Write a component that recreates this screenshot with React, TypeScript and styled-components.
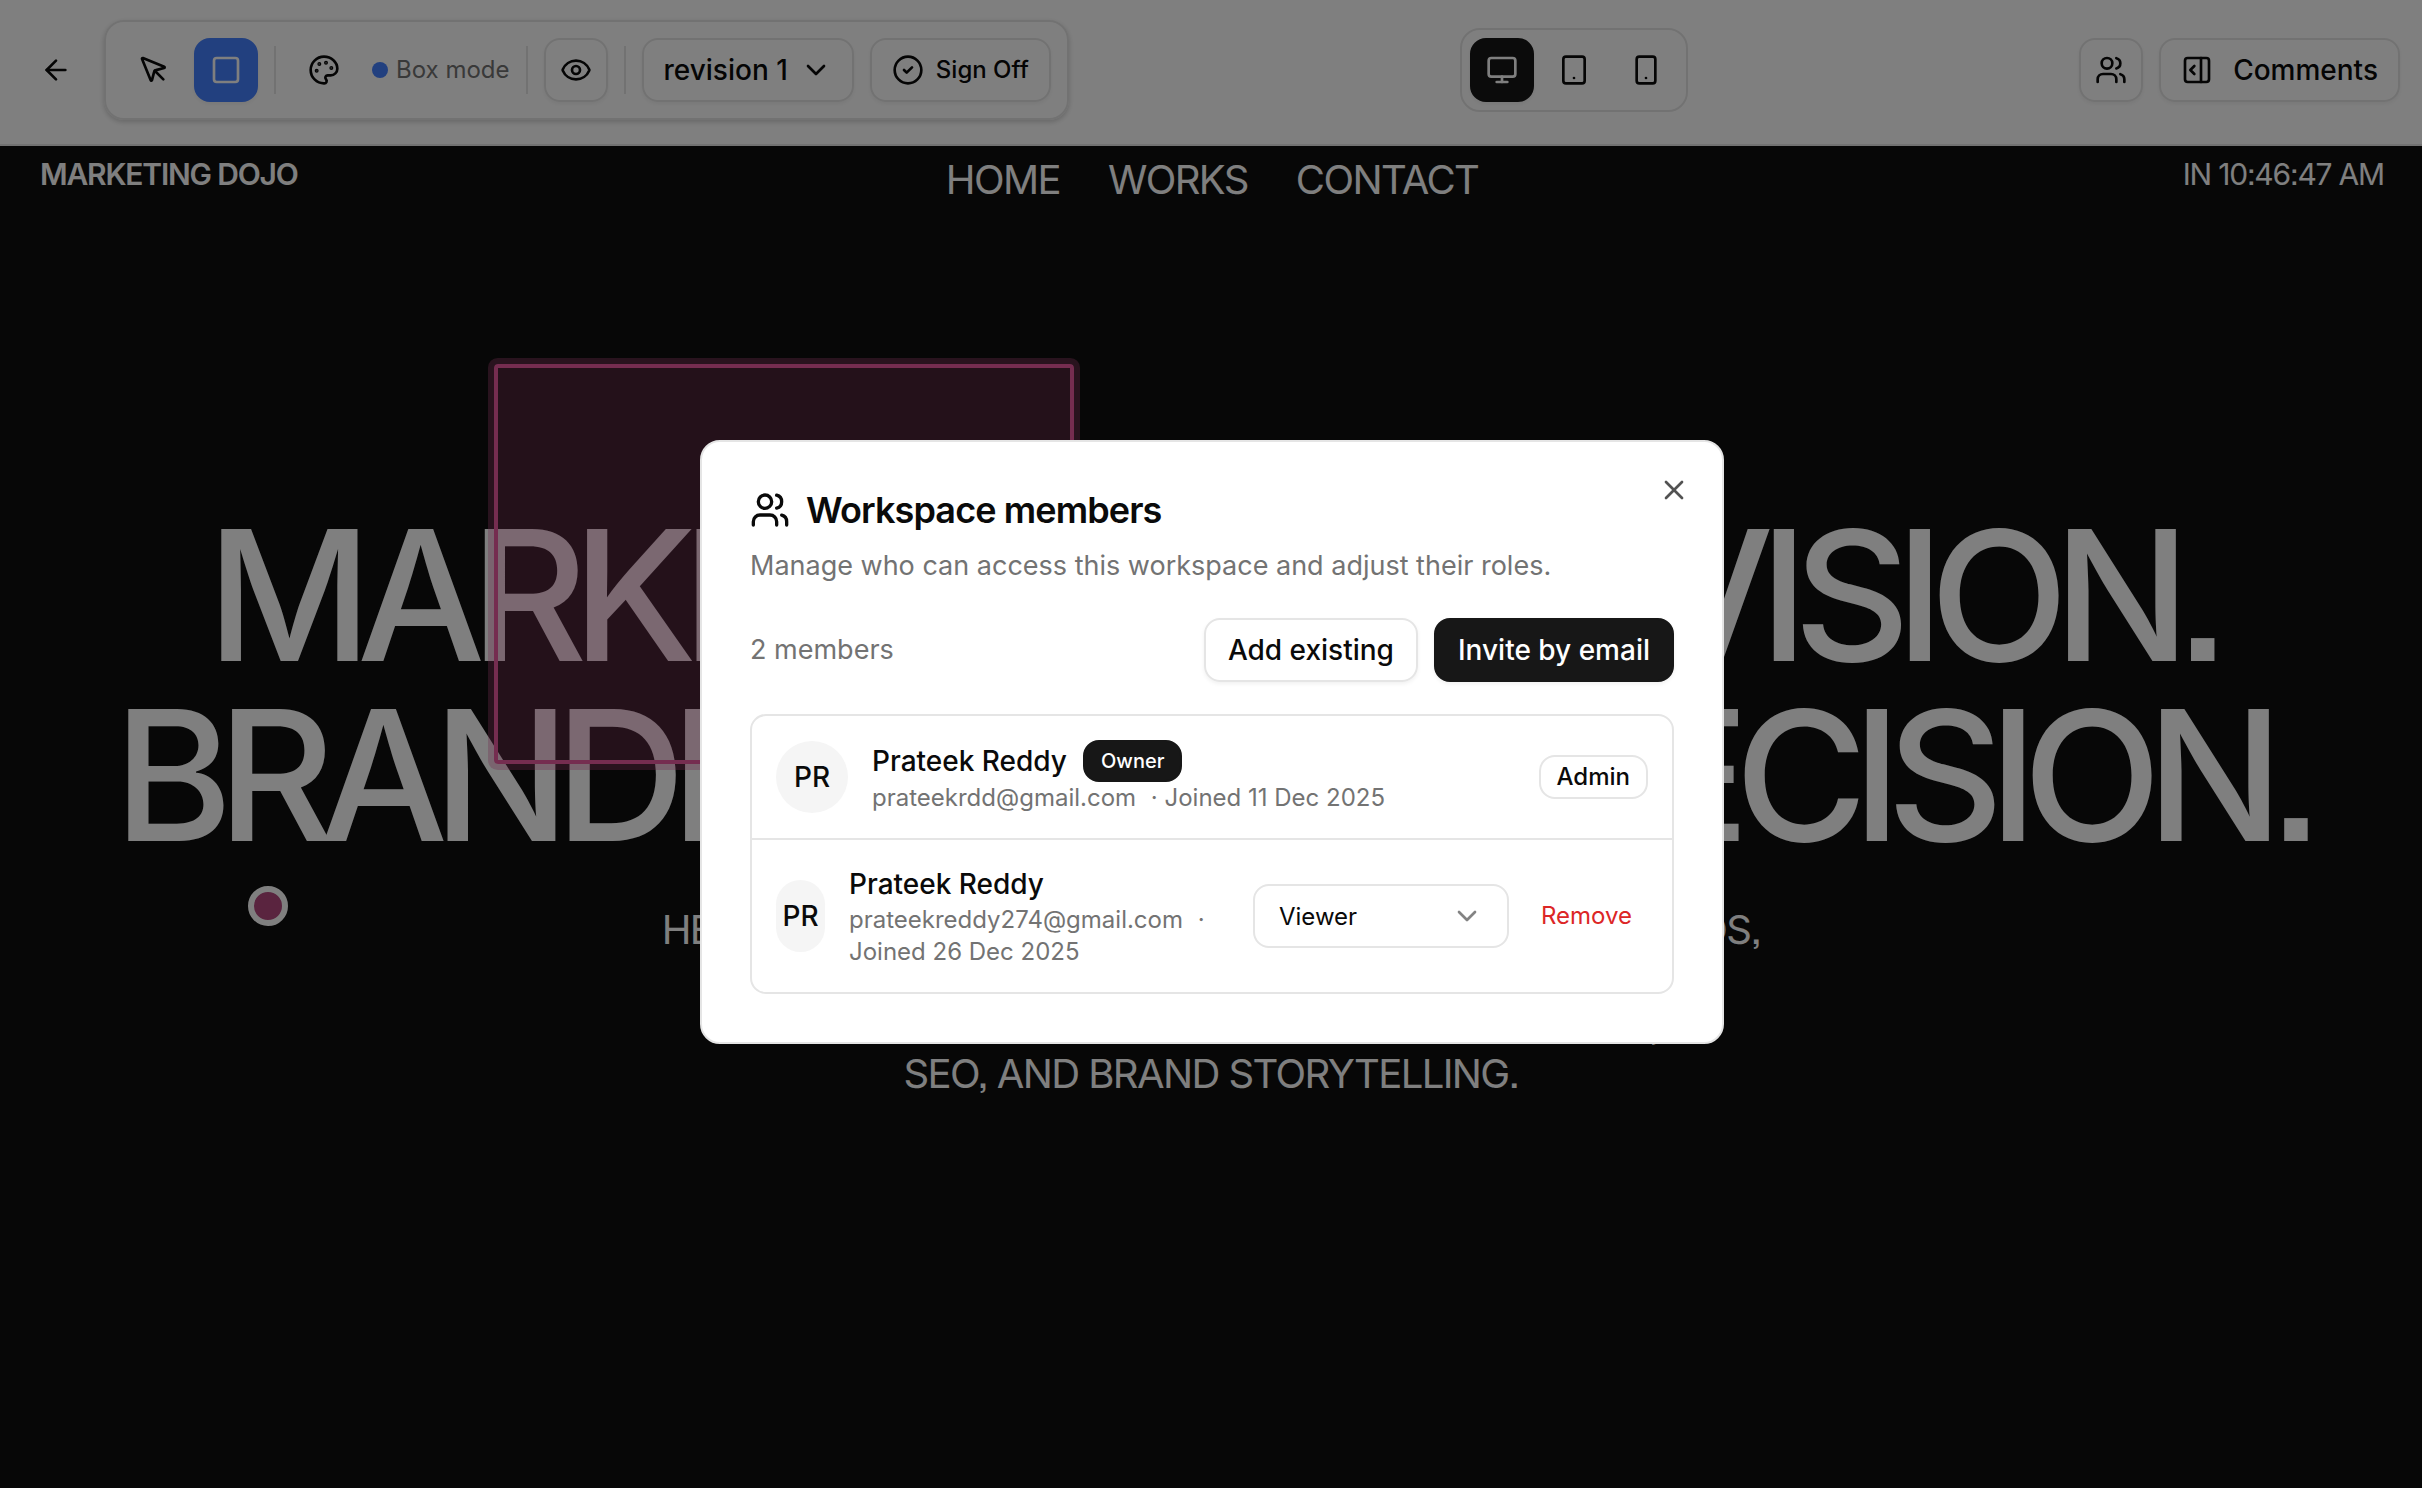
import React, { useState } from "react";
import styled, { createGlobalStyle } from "styled-components";
import {
  ArrowLeft,
  ChevronDown,
  CircleCheck,
  Eye,
  Monitor,
  MousePointer,
  Palette,
  PanelRightOpen,
  Smartphone,
  Square,
  Tablet,
  Users,
  X,
} from "lucide-react";

const color = {
  text: "#0a0a0a",
  muted: "#737373",
  border: "#e5e5e5",
  dark: "#171717",
  blue: "#4580ff",
  danger: "#dc2626",
  page: "#0e0e0e",
};

const GlobalStyle = createGlobalStyle`
  *, *::before, *::after { box-sizing: border-box; }
  body { margin: 0; background: #0e0e0e; }
  body, button, select { font-family: Inter, "Liberation Sans", sans-serif; }
  button, select { cursor: pointer; }
  h1, h2, p, ul { margin: 0; padding: 0; }
`;

const Shell = styled.div`
  display: flex;
  flex-direction: column;
  min-height: 100vh;
  color: ${color.text};
`;

const Toolbar = styled.header`
  display: flex;
  align-items: center;
  justify-content: space-between;
  padding: 20px 22px 24px 24px;
  background: #fff;
  border-bottom: 2px solid ${color.border};
`;

const Cluster = styled.div`
  display: flex;
  align-items: center;
  gap: 16px;
`;

const ToolGroup = styled.div`
  display: flex;
  align-items: center;
  gap: 8px;
  padding: 16px;
  border: 2px solid ${color.border};
  border-radius: 20px;
  box-shadow: 0 2px 6px rgba(0, 0, 0, 0.1), 0 2px 4px rgba(0, 0, 0, 0.1);
`;

const DeviceGroup = styled.div`
  display: flex;
  gap: 8px;
  padding: 8px;
  border: 2px solid ${color.border};
  border-radius: 20px;
`;

const Divider = styled.span`
  width: 2px;
  height: 48px;
  margin: 0 8px;
  background: ${color.border};
`;

const Button = styled.button<{ $variant?: "ghost" | "outline" | "dark" | "blue" }>`
  display: inline-flex;
  align-items: center;
  justify-content: center;
  gap: 12px;
  height: 64px;
  padding: 0 20px;
  border: 2px solid
    ${({ $variant }) =>
      $variant === "outline"
        ? color.border
        : $variant === "dark"
          ? color.dark
          : $variant === "blue"
            ? color.blue
            : "transparent"};
  border-radius: 16px;
  background: ${({ $variant }) =>
    $variant === "dark" ? color.dark : $variant === "blue" ? color.blue : "transparent"};
  color: ${({ $variant }) =>
    $variant === "dark" || $variant === "blue" ? "#fff" : color.text};
  box-shadow: ${({ $variant }) =>
    !$variant || $variant === "ghost" ? "none" : "0 2px 4px rgba(0, 0, 0, 0.06)"};
  font-size: 28px;
  font-weight: 500;
  line-height: 40px;
  white-space: nowrap;
`;

const IconButton = styled(Button)`
  width: 64px;
  padding: 0;
`;

const SmallButton = styled(Button)`
  font-size: 24px;
`;

const WideGap = styled(Button)`
  gap: 20px;
`;

const ActionButton = styled(Button)`
  padding: 0 22px;
`;

const Mode = styled.span`
  display: flex;
  align-items: center;
  gap: 8px;
  padding-left: 8px;
  color: ${color.muted};
  font-size: 24px;
  line-height: 32px;
`;

const ModeDot = styled.span`
  width: 16px;
  height: 16px;
  border-radius: 50%;
  background: ${color.blue};
`;

const Spaced = styled.div`
  display: flex;
  gap: 16px;
`;

const Canvas = styled.main`
  position: relative;
  flex: 1;
  background: ${color.page};
  color: #fff;
  font-feature-settings: "ss07";
`;

const SiteNav = styled.nav`
  display: grid;
  grid-template-columns: 1fr auto 1fr;
  padding: 4px 38px 0 40px;
`;

const Brand = styled.span`
  padding-top: 4px;
  font-size: 30px;
  font-weight: 600;
  line-height: 40px;
  letter-spacing: -0.04em;
`;

const Clock = styled(Brand)`
  font-weight: 400;
  text-align: right;
`;

const SiteLinks = styled.div`
  display: flex;
  gap: 48px;
`;

const SiteLink = styled.a`
  color: inherit;
  font-size: 40px;
  line-height: 60px;
  letter-spacing: -0.04em;
  text-decoration: none;
`;

const Hero = styled.section`
  padding-top: 296px;
  text-align: center;
`;

const Headline = styled.h1`
  font-size: 181px;
  font-weight: 500;
  line-height: 180px;
  letter-spacing: -0.083em;
  white-space: nowrap;
`;

const Lede = styled.p`
  margin-top: 40px;
  font-size: 40px;
  line-height: 48px;
  letter-spacing: -0.04em;
`;

const BoxNote = styled.div`
  position: absolute;
  top: 218px;
  left: 494px;
  width: 580px;
  height: 400px;
  border: 4px solid #ea5aa0;
  border-radius: 4px;
  background: rgba(225, 91, 154, 0.28);
  background-clip: padding-box;
  box-shadow: 0 0 0 6px rgba(225, 91, 154, 0.33);
`;

const PinNote = styled.button`
  position: absolute;
  top: 740px;
  left: 248px;
  width: 40px;
  height: 40px;
  padding: 0;
  border: 6px solid #fff;
  border-radius: 50%;
  background: #b4487e;
`;

const Overlay = styled.div`
  position: fixed;
  inset: 0;
  display: grid;
  place-items: center;
  padding: 0 0 4px 2px;
  background: rgba(0, 0, 0, 0.5);
`;

const Dialog = styled.section`
  position: relative;
  width: 1024px;
  max-width: 100%;
  padding: 48px;
  border: 2px solid ${color.border};
  border-radius: 20px;
  background: #fff;
`;

const CloseButton = styled.button`
  position: absolute;
  top: 32px;
  right: 32px;
  display: flex;
  padding: 0;
  border: 0;
  background: none;
  color: ${color.text};
  opacity: 0.7;
`;

const Title = styled.h2`
  display: flex;
  align-items: center;
  gap: 16px;
  font-size: 36px;
  font-weight: 600;
  line-height: 40px;
  letter-spacing: -0.025em;
`;

const Muted = styled.p`
  color: ${color.muted};
  font-size: 27px;
  line-height: 40px;
`;

const Description = styled(Muted)`
  margin-top: 16px;
`;

const Summary = styled.div`
  display: flex;
  align-items: center;
  justify-content: space-between;
  margin: 32px 0;
`;

const MemberList = styled.ul`
  list-style: none;
  border: 2px solid ${color.border};
  border-radius: 16px;
`;

const Member = styled.li`
  display: flex;
  align-items: center;
  justify-content: space-between;
  gap: 24px;
  padding: 24px;

  & + & {
    border-top: 2px solid ${color.border};
  }
`;

const Identity = styled.div`
  display: flex;
  align-items: center;
  gap: 24px;
  min-width: 0;
`;

const Avatar = styled.span`
  display: flex;
  align-items: center;
  justify-content: center;
  width: 72px;
  min-width: 49px;
  height: 72px;
  border-radius: 36px;
  background: #f5f5f5;
  font-size: 28px;
  font-weight: 500;
`;

const NameLine = styled.div`
  display: flex;
  align-items: center;
  gap: 16px;
  font-size: 28px;
  font-weight: 500;
  line-height: 40px;
`;

const Details = styled.p`
  color: ${color.muted};
  font-size: 24px;
  line-height: 32px;
`;

const Joined = styled.span`
  margin-left: 8px;
`;

const Badge = styled.span<{ $dark?: boolean }>`
  padding: ${({ $dark }) => ($dark ? "5px 16px" : "4px 16px")};
  border: 2px solid ${({ $dark }) => ($dark ? color.dark : color.border)};
  border-radius: 16px;
  background: ${({ $dark }) => ($dark ? color.dark : "#fff")};
  color: ${({ $dark }) => ($dark ? "#fff" : color.text)};
  font-size: ${({ $dark }) => ($dark ? "20px" : "24px")};
  font-weight: 500;
  line-height: ${({ $dark }) => ($dark ? "28px" : "32px")};
`;

const Actions = styled.div`
  display: flex;
  flex-shrink: 0;
  align-items: center;
  gap: 16px;
`;

const SelectBox = styled.label`
  position: relative;
  display: block;

  svg {
    position: absolute;
    top: 16px;
    right: 26px;
    opacity: 0.5;
    pointer-events: none;
  }
`;

const RoleSelect = styled.select`
  width: 256px;
  height: 64px;
  padding: 0 24px;
  border: 2px solid ${color.border};
  border-radius: 16px;
  background: #fff;
  color: ${color.text};
  font-size: 24px;
  appearance: none;
`;

const RemoveButton = styled(SmallButton)`
  padding: 0 14px;
  color: ${color.danger};
  font-weight: 400;
`;

const members = [
  { name: "Prateek Reddy", email: "prateekrdd@gmail.com", joined: "11 Dec 2025", owner: true },
  { name: "Prateek Reddy", email: "prateekreddy274@gmail.com", joined: "26 Dec 2025", owner: false },
];

export default function App() {
  const [role, setRole] = useState("Viewer");

  return (
    <Shell>
      <GlobalStyle />
      <Toolbar>
        <Cluster>
          <IconButton aria-label="Back"><ArrowLeft size={32} /></IconButton>
          <ToolGroup>
            <IconButton aria-label="Pointer"><MousePointer size={32} /></IconButton>
            <IconButton $variant="blue" aria-label="Box"><Square size={32} /></IconButton>
            <Divider />
            <IconButton aria-label="Color"><Palette size={32} /></IconButton>
            <Mode><ModeDot />Box mode</Mode>
            <Divider />
            <IconButton $variant="outline" aria-label="Preview"><Eye size={32} /></IconButton>
            <Divider />
            <Spaced>
              <Button $variant="outline">revision 1<ChevronDown size={32} /></Button>
              <SmallButton $variant="outline"><CircleCheck size={32} />Sign Off</SmallButton>
            </Spaced>
          </ToolGroup>
        </Cluster>
        <DeviceGroup>
          <IconButton $variant="dark" aria-label="Desktop"><Monitor size={32} /></IconButton>
          <IconButton aria-label="Tablet"><Tablet size={32} /></IconButton>
          <IconButton aria-label="Phone"><Smartphone size={32} /></IconButton>
        </DeviceGroup>
        <Cluster>
          <IconButton $variant="outline" aria-label="Members"><Users size={32} /></IconButton>
          <WideGap $variant="outline"><PanelRightOpen size={32} />Comments</WideGap>
        </Cluster>
      </Toolbar>

      <Canvas>
        <SiteNav>
          <Brand>MARKETING DOJO</Brand>
          <SiteLinks>
            <SiteLink href="#home">HOME</SiteLink>
            <SiteLink href="#works">WORKS</SiteLink>
            <SiteLink href="#contact">CONTACT</SiteLink>
          </SiteLinks>
          <Clock>IN 10:46:47 AM</Clock>
        </SiteNav>
        <Hero>
          <Headline>
            MARKETING WITH VISION.
            <br />
            BRANDING WITH PRECISION.
          </Headline>
          <Lede>
            HELPING AMBITIOUS FOUNDERS, CREATORS, AND STUDIOS,
            <br />
            GROW THROUGH CREATIVE STRATEGY
            <br />
            USING DESIGN AND PERFORMANCE MARKETING,
            <br />
            SEO, AND BRAND STORYTELLING.
          </Lede>
        </Hero>
        <BoxNote />
        <PinNote aria-label="Open comment" />
      </Canvas>

      <Overlay>
        <Dialog role="dialog" aria-modal="true" aria-labelledby="members-title">
          <Title id="members-title"><Users size={40} />Workspace members</Title>
          <Description>Manage who can access this workspace and adjust their roles.</Description>
          <Summary>
            <Muted>2 members</Muted>
            <Spaced>
              <ActionButton $variant="outline">Add existing</ActionButton>
              <ActionButton $variant="dark">Invite by email</ActionButton>
            </Spaced>
          </Summary>
          <MemberList>
            {members.map((m) => (
              <Member key={m.email}>
                <Identity>
                  <Avatar>PR</Avatar>
                  <div>
                    <NameLine>
                      {m.name}
                      {m.owner && <Badge $dark>Owner</Badge>}
                    </NameLine>
                    <Details>
                      {m.email} <Joined>· Joined {m.joined}</Joined>
                    </Details>
                  </div>
                </Identity>
                {m.owner ? (
                  <Badge>Admin</Badge>
                ) : (
                  <Actions>
                    <SelectBox>
                      <RoleSelect
                        aria-label="Role"
                        value={role}
                        onChange={(e) => setRole(e.target.value)}
                      >
                        <option>Viewer</option>
                        <option>Editor</option>
                        <option>Admin</option>
                      </RoleSelect>
                      <ChevronDown size={32} />
                    </SelectBox>
                    <RemoveButton>Remove</RemoveButton>
                  </Actions>
                )}
              </Member>
            ))}
          </MemberList>
          <CloseButton aria-label="Close"><X size={32} /></CloseButton>
        </Dialog>
      </Overlay>
    </Shell>
  );
}
